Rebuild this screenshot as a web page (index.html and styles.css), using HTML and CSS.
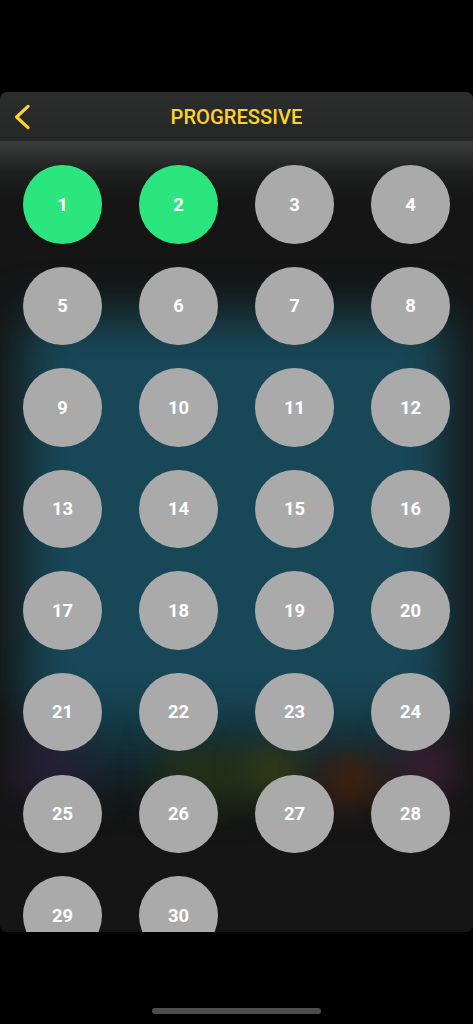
FILE: index.html
```html
<!DOCTYPE html>
<html lang="en">
<head>
<meta charset="utf-8">
<title>Progressive</title>
<link rel="stylesheet" href="styles.css">
</head>
<body>
<main class="screen">
  <section class="panel">
    <div class="glow" aria-hidden="true">
      <div class="glow-deep"></div>
      <div class="glow-teal"></div>
      <div class="glow-purple"></div>
      <div class="glow-green"></div>
      <div class="glow-olive"></div>
      <div class="glow-red"></div>
      <div class="glow-plum"></div>
    </div>
    <header class="topbar">
      <svg class="back" viewBox="0 0 16 26" width="16" height="26" aria-hidden="true"><path d="M14 2.4 2.6 13 14 23.6" fill="none" stroke="#fdd22c" stroke-width="3.2" stroke-linecap="round" stroke-linejoin="round"/></svg>
      <h1 class="title">PROGRESSIVE</h1>
    </header>
    <div class="levels">
      <div class="level done">1</div><div class="level done">2</div><div class="level">3</div><div class="level">4</div>
      <div class="level">5</div><div class="level">6</div><div class="level">7</div><div class="level">8</div>
      <div class="level">9</div><div class="level">10</div><div class="level">11</div><div class="level">12</div>
      <div class="level">13</div><div class="level">14</div><div class="level">15</div><div class="level">16</div>
      <div class="level">17</div><div class="level">18</div><div class="level">19</div><div class="level">20</div>
      <div class="level">21</div><div class="level">22</div><div class="level">23</div><div class="level">24</div>
      <div class="level">25</div><div class="level">26</div><div class="level">27</div><div class="level">28</div>
      <div class="level">29</div><div class="level">30</div>
    </div>
  </section>
  <div class="home-indicator"></div>
</main>
</body>
</html>
```
FILE: styles.css
```css
* { box-sizing: border-box; }
html, body { margin: 0; height: 100%; background: #000; }
body { font-family: Roboto, "Liberation Sans", sans-serif; overflow: hidden; }
.screen { height: 1024px; padding-top: 92px; display: flex; flex-direction: column; }
.panel {
  position: relative;
  height: 840px;
  overflow: hidden;
  border-radius: 7px;
  background: #151515;
}
.glow { position: absolute; inset: 0; overflow: hidden; }
.glow > div { position: absolute; }
.glow-deep { left: 50px; right: 60px; top: 590px; height: 95px; background: #14303a; filter: blur(24px); }
.glow-teal { left: 24px; right: 24px; top: 224px; height: 402px; background: #184858; filter: blur(24px); }
.glow-purple { left: 15px; top: 650px; width: 70px; height: 50px; background: #2a213c; filter: blur(22px); }
.glow-green { left: 160px; top: 655px; width: 95px; height: 55px; background: #243017; filter: blur(18px); }
.glow-olive { left: 250px; top: 660px; width: 50px; height: 40px; background: #3b3d12; filter: blur(16px); }
.glow-red { left: 320px; top: 665px; width: 60px; height: 45px; background: #43210f; filter: blur(17px); }
.glow-plum { left: 395px; top: 650px; width: 60px; height: 50px; background: #3b2030; filter: blur(18px); }
.topbar {
  position: relative;
  height: 50px;
  display: flex;
  align-items: center;
  justify-content: center;
  background: linear-gradient(#2c2d2d, #252626);
  border-bottom: 1px solid #3b3b3b;
}
.back { position: absolute; left: 14px; top: 12px; }
.title { margin: 0; font-size: 20.2px; font-weight: 500; line-height: 50px; color: #fdd22c; }
.levels {
  position: relative;
  height: 790px;
  padding: 23px 23.25px 0;
  display: grid;
  grid-template-columns: repeat(4, 78.5px);
  grid-auto-rows: 78.5px;
  column-gap: 37.5px;
  row-gap: 23.1px;
  background: linear-gradient(#3b3c3c 0, #1e1f1f 30px, rgba(21,21,21,0) 60px);
}
.level {
  border-radius: 50%;
  display: flex;
  align-items: center;
  justify-content: center;
  padding-bottom: 0.5px;
  background: #aaa;
  color: #fff;
  font-size: 18.4px;
  font-weight: 700;
}
.done { background: #2be57f; }
.home-indicator {
  width: 169px;
  height: 6px;
  margin: 76px auto 0;
  border-radius: 3px;
  background: #4d4d4d;
}
```
